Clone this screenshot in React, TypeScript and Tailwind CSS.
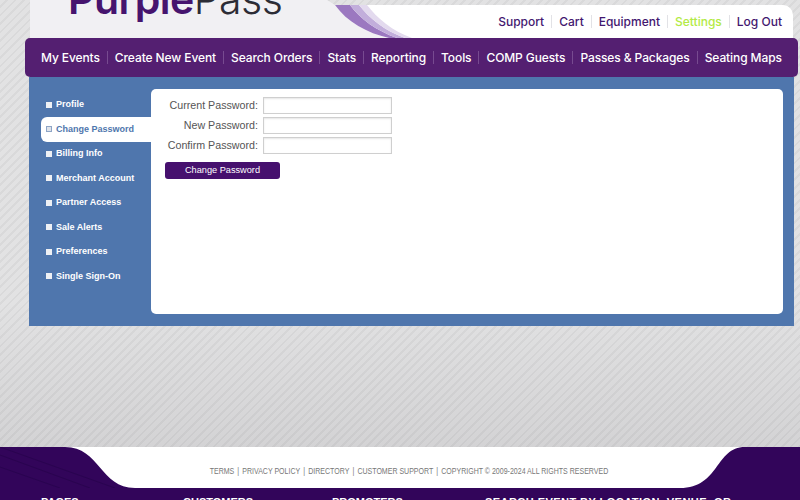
const navItems = ['My Events', 'Create New Event', 'Search Orders', 'Stats', 'Reporting', 'Tools', 'COMP Guests', 'Passes & Packages', 'Seating Maps'];
const topLinks = ['Support', 'Cart', 'Equipment', 'Settings', 'Log Out'];
const sideItems = ['Profile', 'Change Password', 'Billing Info', 'Merchant Account', 'Partner Access', 'Sale Alerts', 'Preferences', 'Single Sign-On'];
const fields = ['Current Password:', 'New Password:', 'Confirm Password:'];
const footerLinks = ['TERMS', 'PRIVACY POLICY', 'DIRECTORY', 'CUSTOMER SUPPORT', 'COPYRIGHT © 2009-2024 ALL RIGHTS RESERVED'];

export default function App() {
  return (
    <div className="h-[500px] w-[800px] overflow-hidden flex flex-col bg-[linear-gradient(180deg,rgba(0,0,0,0)_0px,rgba(0,0,0,0)_300px,rgba(20,15,25,0.07)_447px),repeating-linear-gradient(135deg,#e2e2e3_0px,#e2e2e3_4px,#d9d9da_4px,#d9d9da_6px)] font-['Inter',sans-serif]">
      {/* header */}
      <div className="ml-[30px] mr-[7px] h-[38px] shrink-0 relative overflow-hidden flex">
        <div className="w-[297px] bg-[#f1f0f3] pl-[38px]">
          <div className="-mt-[25px] text-[41px] leading-[48px] tracking-[-0.5px] text-[#2c2c35] font-light whitespace-nowrap">
            <span className="font-semibold text-[#46146e]">Purple</span>Pass
          </div>
        </div>
        <div className="flex-1 mt-[5px] bg-white rounded-tr-[10px] flex justify-end items-center pr-[11px]">
          {topLinks.map((link, i) => (
            <div key={link} className="flex items-center">
              {i > 0 && <div className="h-[13px] border-l border-[#e2e2e6] mx-[7px]" />}
              <span className={`text-[12px] font-medium ${link === 'Settings' ? 'text-[#b3ea45]' : 'text-[#43176f]'}`}>{link}</span>
            </div>
          ))}
        </div>
        <svg className="absolute left-[297px] top-0" width="90" height="38" viewBox="0 0 90 38">
          <path d="M0 0L8 5C20 22 40 33 62 38H0Z" fill="#f1f0f3" />
          <path d="M8 5H23C33 19 50 31 70 38H62C40 33 20 22 8 5Z" fill="#9b78c0" />
          <path d="M23 5H32C42 18 58 31 78 38H70C50 31 33 19 23 5Z" fill="#c2aedb" />
          <path d="M32 5H40C50 18 65 31 85 38H78C58 31 42 18 32 5Z" fill="#e3daee" />
        </svg>
      </div>

      {/* main nav */}
      <div className="ml-[25px] mr-[2px] h-[39px] shrink-0 bg-[#541f71] rounded-[5px] flex items-center pl-[16px]">
        {navItems.map((item, i) => (
          <div key={item} className="flex items-center">
            {i > 0 && <div className="h-[13px] border-l border-[#774a90] mx-[7px]" />}
            <span className="text-[12px] tracking-[-0.1px] font-medium text-white whitespace-nowrap">{item}</span>
          </div>
        ))}
      </div>

      {/* settings panel */}
      <div className="ml-[29px] mr-[6px] h-[249px] shrink-0 bg-[#4f76ad] flex py-[12px] pr-[11px]">
        <div className="w-[122px] shrink-0 pt-[3.5px] pl-[12px]">
          {sideItems.map((item) => {
            const active = item === 'Change Password';
            return (
              <div
                key={item}
                className={`h-[24.5px] pl-[5px] flex items-center gap-[4px] text-[9px] font-bold font-['Liberation_Sans',sans-serif] ${
                  active ? 'bg-white rounded-l-[6px] text-[#4f76ad]' : 'text-white'
                }`}
              >
                <span className={`w-[6px] h-[6px] ${active ? 'bg-[#dfe3ea] border border-[#8ea5c6]' : 'bg-[#eef0f4]'}`} />
                <span className="whitespace-nowrap">{item}</span>
              </div>
            );
          })}
        </div>
        <div className="flex-1 bg-white rounded-[5px] pt-[8px] pl-[14px] font-['Liberation_Sans',sans-serif]">
          <div className="flex flex-col gap-[3px]">
            {fields.map((label) => (
              <div key={label} className="flex items-center gap-[5px]">
                <span className="w-[93px] text-right text-[10.7px] leading-none text-[#555555] whitespace-nowrap">{label}</span>
                <div className="w-[129px] h-[17px] border border-[#cfcfcf] bg-white shadow-[inset_0_1px_2px_rgba(0,0,0,0.1)]" />
              </div>
            ))}
          </div>
          <button className="mt-[8px] w-[115px] h-[17px] rounded-[3px] bg-[#46106e] text-white text-[9.2px] leading-none flex items-center justify-center">
            Change Password
          </button>
        </div>
      </div>

      <div className="flex-1" />

      {/* footer */}
      <div className="h-[53px] shrink-0 bg-[#32055a] relative overflow-hidden">
        <svg className="absolute left-0 top-0" width="800" height="41" viewBox="0 0 800 41">
          <path d="M0 8L90 41M0 20L60 41M0 0L115 41" stroke="#2a0450" strokeWidth="1" fill="none" />
          <path d="M65 0C100 0 100 41 135 41H680C720 41 715 0 745 0Z" fill="white" />
        </svg>
        <div className="absolute left-0 right-0 top-[18px] flex justify-center items-center text-[9px] text-[#777777] font-['Liberation_Sans',sans-serif] pl-[23px] scale-x-[0.78]">
          {footerLinks.map((link, i) => (
            <div key={link} className="flex items-center whitespace-nowrap">
              {i > 0 && <span className="mx-[4px]">|</span>}
              {link}
            </div>
          ))}
        </div>
        <div className="absolute left-0 right-0 top-[49px] h-[12px] text-[11px] leading-[12px] font-bold text-white font-['Liberation_Sans',sans-serif]">
          <span className="absolute left-[41px]">PAGES</span>
          <span className="absolute left-[183px]">CUSTOMERS</span>
          <span className="absolute left-[332px]">PROMOTERS</span>
          <span className="absolute left-[485px] tracking-[0.45px] whitespace-nowrap">SEARCH EVENT BY LOCATION, VENUE, OR</span>
        </div>
      </div>
    </div>
  );
}
